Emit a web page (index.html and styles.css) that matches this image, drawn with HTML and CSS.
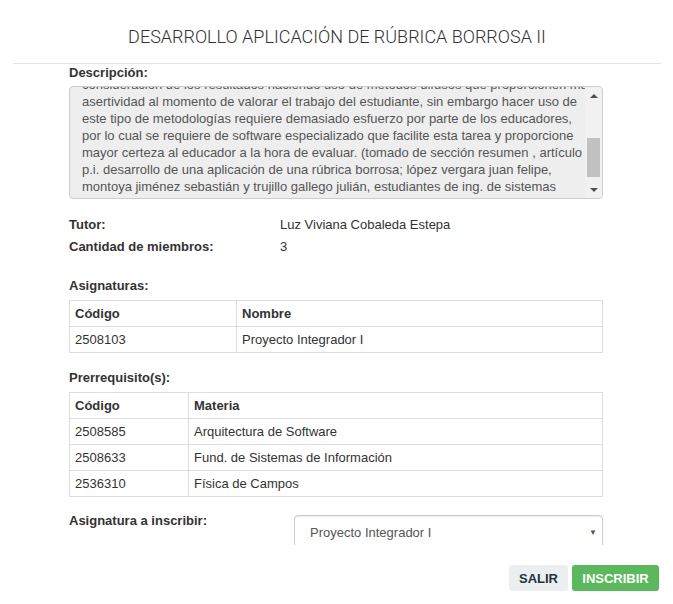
FILE: index.html
```html
<!DOCTYPE html>
<html lang="es">
<head>
<meta charset="utf-8">
<title>Desarrollo aplicación</title>
<link rel="stylesheet" href="styles.css">
</head>
<body>
<div class="modal">
  <div class="modal-header">
    <h4 class="modal-title">DESARROLLO APLICACIÓN DE RÚBRICA BORROSA II</h4>
  </div>
  <div class="modal-body">
    <div class="label label-desc">Descripción:</div>
    <div class="desc">
      <div class="desc-view">
        <div class="desc-text">
          <div>consideración de los resultados haciendo uso de métodos difusos que proporcionen mayor</div>
          <div>asertividad al momento de valorar el trabajo del estudiante, sin embargo hacer uso de</div>
          <div>este tipo de metodologías requiere demasiado esfuerzo por parte de los educadores,</div>
          <div>por lo cual se requiere de software especializado que facilite esta tarea y proporcione</div>
          <div>mayor certeza al educador a la hora de evaluar. (tomado de sección resumen , artículo</div>
          <div>p.i. desarrollo de una aplicación de una rúbrica borrosa; lópez vergara juan felipe,</div>
          <div>montoya jiménez sebastián y trujillo gallego julián, estudiantes de ing. de sistemas</div>
          <div>udea.)</div>
        </div>
      </div>
      <div class="scrollbar">
        <div class="sb-btn"><span class="tri-up"></span></div>
        <div class="sb-track"><div class="sb-thumb"></div></div>
        <div class="sb-btn"><span class="tri-down"></span></div>
      </div>
    </div>

    <div class="info">
      <div class="label">Tutor:</div><div>Luz Viviana Cobaleda Estepa</div>
      <div class="label">Cantidad de miembros:</div><div>3</div>
    </div>

    <div class="label section-label first">Asignaturas:</div>
    <table class="tbl tbl-asig">
      <thead><tr><th>Código</th><th>Nombre</th></tr></thead>
      <tbody><tr><td>2508103</td><td>Proyecto Integrador I</td></tr></tbody>
    </table>

    <div class="label section-label">Prerrequisito(s):</div>
    <table class="tbl tbl-pre">
      <thead><tr><th>Código</th><th>Materia</th></tr></thead>
      <tbody>
        <tr><td>2508585</td><td>Arquitectura de Software</td></tr>
        <tr><td>2508633</td><td>Fund. de Sistemas de Información</td></tr>
        <tr><td>2536310</td><td>Física de Campos</td></tr>
      </tbody>
    </table>

    <div class="form-row">
      <div class="label form-label">Asignatura a inscribir:</div>
      <div class="select">
        <span>Proyecto Integrador I</span>
        <span class="caret">▼</span>
      </div>
    </div>
  </div>
  <div class="modal-footer">
    <button class="btn btn-default">SALIR</button>
    <button class="btn btn-success">INSCRIBIR</button>
  </div>
</div>
</body>
</html>
```
FILE: styles.css
```css
* { box-sizing: border-box; }
html, body { margin: 0; padding: 0; background: #fff; }
body {
  font-family: "Liberation Sans", Arial, sans-serif;
  font-size: 13px;
  color: #333;
}
.modal {
  width: 673px;
  height: 604px;
  display: flex;
  flex-direction: column;
  overflow: hidden;
}
.modal-header {
  margin: 0 12px 0 13px;
  padding: 27px 0 16px;
  border-bottom: 1px solid #e5e5e5;
  text-align: center;
}
.modal-title {
  margin: 0;
  font-family: Roboto, "Liberation Sans", sans-serif;
  font-weight: 300;
  font-size: 18px;
  line-height: 20px;
  color: #333;
}
.modal-body {
  height: 481px;
  padding: 0 70px 0 69px;
  overflow: hidden;
  flex: none;
}
.label {
  font-weight: bold;
  line-height: 18px;
}
.label-desc { margin-top: 0; }
.desc {
  margin-top: 4px;
  height: 113px;
  border: 1px solid #ccc;
  border-radius: 4px;
  background: #eee;
  display: flex;
  overflow: hidden;
}
.desc-view {
  flex: 1;
  overflow: hidden;
  padding-left: 12px;
}
.desc-text {
  margin-top: -11px;
  color: #555;
  line-height: 17px;
  white-space: nowrap;
}
.scrollbar {
  width: 17px;
  background: #f1f1f1;
  display: flex;
  flex-direction: column;
}
.sb-btn {
  height: 17px;
  display: flex;
  align-items: center;
  justify-content: center;
}
.tri-up, .tri-down {
  width: 0; height: 0;
  border-left: 4px solid transparent;
  border-right: 4px solid transparent;
}
.tri-up { border-bottom: 4px solid #505050; }
.tri-down { border-top: 4px solid #505050; }
.sb-track {
  flex: 1;
  padding: 34px 2px 0;
}
.sb-thumb {
  height: 39px;
  background: #c1c1c1;
}
.info {
  margin-top: 17px;
  display: grid;
  grid-template-columns: 211px 1fr;
  row-gap: 4px;
  line-height: 18px;
}
.section-label { margin-top: 16px; }
.section-label.first { margin-top: 21px; }
.tbl {
  margin-top: 5px;
  width: 100%;
  border-collapse: collapse;
  border: 1px solid #ddd;
}
.tbl th, .tbl td {
  border: 1px solid #ddd;
  padding: 4px 5px;
  line-height: 17px;
  text-align: left;
}
.tbl th { font-weight: bold; }
.tbl-asig th:first-child { width: 167px; }
.tbl-pre th:first-child { width: 119px; }
.form-row {
  margin-top: 18px;
  display: flex;
  align-items: flex-start;
}
.form-label { width: 225px; flex: none; margin-top: -3px; }
.select {
  flex: 1;
  height: 34px;
  border: 1px solid #ccc;
  border-radius: 4px;
  padding: 0 5px 0 15px;
  display: flex;
  align-items: center;
  justify-content: space-between;
  color: #555;
  box-shadow: inset 0 1px 1px rgba(0,0,0,.075);
}
.caret { font-size: 8px; color: #555; }
.modal-footer {
  display: flex;
  justify-content: flex-end;
  gap: 4px;
  padding: 20px 14px 0 0;
}
.btn {
  height: 26px;
  border: none;
  border-radius: 3px;
  padding: 0 10px;
  font-family: "Liberation Sans", Arial, sans-serif;
  font-weight: bold;
  font-size: 13px;
}
.btn-default { background: #eceff1; color: #263238; width: 59px; }
.btn-success { background: #5cb85c; color: #fff; width: 87px; }
```
